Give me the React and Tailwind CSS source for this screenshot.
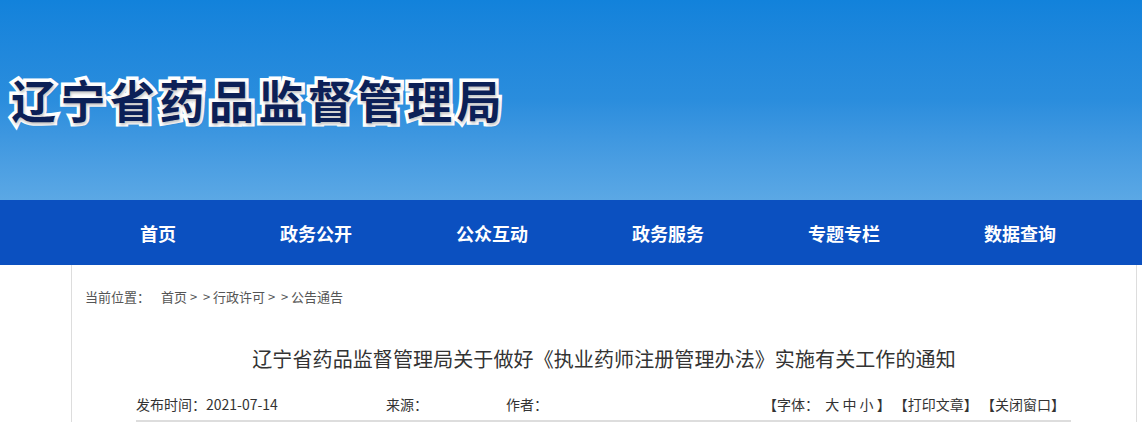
export default function App() {
  const nav = ["首页", "政务公开", "公众互动", "政务服务", "专题专栏", "数据查询"];
  const Sep = () => <span className="inline-block w-[13px] text-center">&gt;</span>;
  return (
    <div className="w-[1142px] h-[422px] overflow-hidden bg-white font-['Noto_Sans_CJK_SC','Noto_Sans',sans-serif]">
      <div className="h-[200px] bg-gradient-to-b from-[#1282db] via-[#2a8ddd] to-[#5ba8e5] flex items-center pl-[11px]">
        <h1 className="text-[45px] leading-none font-bold tracking-[4.5px] text-[#0c2057] [-webkit-text-stroke:7px_white] [paint-order:stroke_fill] [text-shadow:1px_2px_3px_rgba(0,0,0,0.25)] -mt-[2px]">
          辽宁省药品监督管理局
        </h1>
      </div>
      <div className="h-[65px] bg-[#0b50c0] flex items-center pl-[140px] gap-[104px]">
        {nav.map((n) => (
          <span key={n} className="text-white text-[18px] font-bold leading-none">{n}</span>
        ))}
      </div>
      <div className="ml-[71px] w-[1066px] h-[200px] border-l border-r border-[#dddddd] bg-white">
        <div className="pt-[22px] pl-[13px] text-[13px] leading-[20px] text-[#555]">
          当前位置：<span className="ml-[11px]">首页<Sep /><Sep />行政许可<Sep /><Sep />公告通告</span>
        </div>
        <h2 className="mt-[38px] text-center text-[20px] leading-[28px] text-[#333] tracking-[0.1px]">
          辽宁省药品监督管理局关于做好《执业药师注册管理办法》实施有关工作的通知
        </h2>
        <div className="mt-[21px] ml-[64px] w-[935px] flex items-center text-[14px] leading-[20px] text-[#333] pb-[6px] border-b-2 border-[#dddddd]">
          <span className="w-[250px]">发布时间：2021-07-14</span>
          <span className="w-[120px]">来源：</span>
          <span>作者：</span>
          <span className="ml-auto pr-[6px]">【字体：&nbsp; 大&nbsp;中&nbsp;小&nbsp;】&nbsp;【打印文章】&nbsp;【关闭窗口】</span>
        </div>
      </div>
    </div>
  );
}
